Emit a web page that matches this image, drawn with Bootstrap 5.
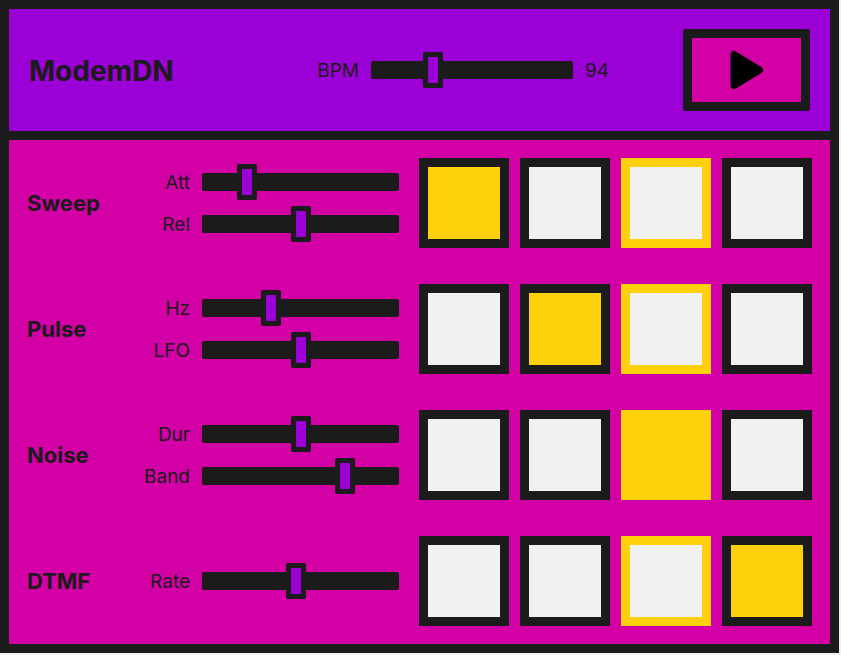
<!DOCTYPE html>
<html lang="en">
<head>
<meta charset="utf-8">
<meta name="viewport" content="width=device-width, initial-scale=1">
<title>ModemDN</title>
<link rel="stylesheet" href="https://cdn.jsdelivr.net/npm/bootstrap@5.3.0/dist/css/bootstrap.min.css">
<style>
:root { --ink: #1b1b1b; --violet: #9b00d6; --pink: #d200a5; --gold: #fcd00b; --paper: #f1f1f1; }
body { background: var(--paper); color: var(--ink); font: 400 19px/24px Inter, "Liberation Sans", sans-serif; }
.machine { border: 9px solid var(--ink); margin-right: 2px; background: var(--pink); }
.topbar { background: var(--violet); border-bottom: 9px solid var(--ink); padding: 20px; }
.brand { padding-top: 2px; font-size: 28px; line-height: 34px; font-weight: 700; }
.fader { gap: 12px; }
.fader label, .fader output { padding-top: 2px; line-height: 22px; }
.tempo-range { width: 202px; }
.tempo-value { width: 98px; }
.play { width: 127px; height: 82px; border: 9px solid var(--ink); border-radius: 2px; background: var(--pink); }
.track { padding: 18px; gap: 20px; }
.track-name { width: 92px; font-size: 22px; line-height: 28px; font-weight: 700; }
.faders { gap: 18px; min-width: 0; }
.fader-label { width: 51px; white-space: nowrap; display: flex; justify-content: flex-end; }
.pads { gap: 11px; }
.pad { width: 90px; height: 90px; border: 9px solid var(--ink); background: var(--paper); }
.pad.lit { background: var(--gold); }
.pad.now { border-color: var(--gold); }
.slide { appearance: none; -webkit-appearance: none; display: block; height: 18px; margin: 0; min-width: 0; border-radius: 2px; background: var(--ink); }
.slide::-webkit-slider-thumb { -webkit-appearance: none; width: 20px; height: 36px; border: 5px solid var(--ink); border-radius: 2px; background: var(--violet); }
.slide::-moz-range-thumb { box-sizing: border-box; width: 20px; height: 36px; border: 5px solid var(--ink); border-radius: 2px; background: var(--violet); }
</style>
<script src="https://cdn.jsdelivr.net/npm/bootstrap@5.3.0/dist/js/bootstrap.bundle.min.js" defer></script>
</head>
<body>
<main class="machine">
  <header class="topbar d-flex align-items-center">
    <h1 class="brand mb-0 me-auto">ModemDN</h1>
    <div class="fader d-flex align-items-center">
      <label for="bpm">BPM</label>
      <input class="slide tempo-range" type="range" id="bpm" min="60" max="180" value="94">
      <output class="tempo-value" for="bpm">94</output>
    </div>
    <button class="play d-flex align-items-center justify-content-center p-0" type="button" aria-label="Play">
      <svg width="34" height="40" viewBox="0 0 34 40" aria-hidden="true"><path d="M4 4.500 V35.500 L29.500 20Z" fill="#000" stroke="#000" stroke-width="7" stroke-linejoin="round"/></svg>
    </button>
  </header>

  <section class="track d-flex align-items-center">
    <h2 class="track-name mb-0">Sweep</h2>
    <div class="faders d-flex flex-column flex-fill">
      <div class="fader d-flex align-items-center"><label class="fader-label" for="att">Att</label><input class="slide flex-fill" type="range" id="att" value="20"></div>
      <div class="fader d-flex align-items-center"><label class="fader-label" for="rel">Rel</label><input class="slide flex-fill" type="range" id="rel" value="50"></div>
    </div>
    <div class="pads d-flex">
      <button class="pad lit" type="button" aria-label="Sweep step 1" aria-pressed="true"></button>
      <button class="pad" type="button" aria-label="Sweep step 2" aria-pressed="false"></button>
      <button class="pad now" type="button" aria-label="Sweep step 3" aria-pressed="false"></button>
      <button class="pad" type="button" aria-label="Sweep step 4" aria-pressed="false"></button>
    </div>
  </section>

  <section class="track d-flex align-items-center">
    <h2 class="track-name mb-0">Pulse</h2>
    <div class="faders d-flex flex-column flex-fill">
      <div class="fader d-flex align-items-center"><label class="fader-label" for="hz">Hz</label><input class="slide flex-fill" type="range" id="hz" min="0" max="60" value="20"></div>
      <div class="fader d-flex align-items-center"><label class="fader-label" for="lfo">LFO</label><input class="slide flex-fill" type="range" id="lfo" value="50"></div>
    </div>
    <div class="pads d-flex">
      <button class="pad" type="button" aria-label="Pulse step 1" aria-pressed="false"></button>
      <button class="pad lit" type="button" aria-label="Pulse step 2" aria-pressed="true"></button>
      <button class="pad now" type="button" aria-label="Pulse step 3" aria-pressed="false"></button>
      <button class="pad" type="button" aria-label="Pulse step 4" aria-pressed="false"></button>
    </div>
  </section>

  <section class="track d-flex align-items-center">
    <h2 class="track-name mb-0">Noise</h2>
    <div class="faders d-flex flex-column flex-fill">
      <div class="fader d-flex align-items-center"><label class="fader-label" for="dur">Dur</label><input class="slide flex-fill" type="range" id="dur" value="50"></div>
      <div class="fader d-flex align-items-center"><label class="fader-label" for="band">Band</label><input class="slide flex-fill" type="range" id="band" value="75"></div>
    </div>
    <div class="pads d-flex">
      <button class="pad" type="button" aria-label="Noise step 1" aria-pressed="false"></button>
      <button class="pad" type="button" aria-label="Noise step 2" aria-pressed="false"></button>
      <button class="pad lit now" type="button" aria-label="Noise step 3" aria-pressed="true"></button>
      <button class="pad" type="button" aria-label="Noise step 4" aria-pressed="false"></button>
    </div>
  </section>

  <section class="track d-flex align-items-center">
    <h2 class="track-name mb-0">DTMF</h2>
    <div class="faders d-flex flex-column flex-fill">
      <div class="fader d-flex align-items-center"><label class="fader-label" for="rate">Rate</label><input class="slide flex-fill" type="range" id="rate" min="0" max="40" value="19"></div>
    </div>
    <div class="pads d-flex">
      <button class="pad" type="button" aria-label="DTMF step 1" aria-pressed="false"></button>
      <button class="pad" type="button" aria-label="DTMF step 2" aria-pressed="false"></button>
      <button class="pad now" type="button" aria-label="DTMF step 3" aria-pressed="false"></button>
      <button class="pad lit" type="button" aria-label="DTMF step 4" aria-pressed="true"></button>
    </div>
  </section>
</main>
</body>
</html>
